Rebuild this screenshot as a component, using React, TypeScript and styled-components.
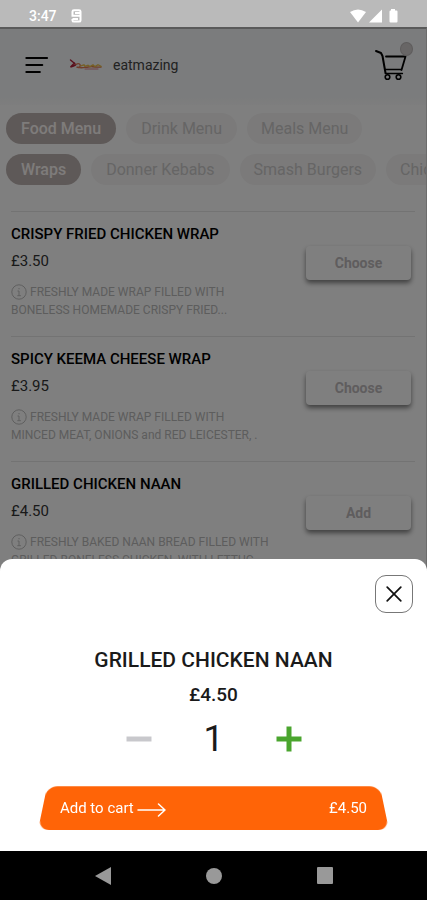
import React, { useState } from "react";
import styled, { createGlobalStyle } from "styled-components";

const GlobalStyle = createGlobalStyle`
  * { box-sizing: border-box; }
  body { margin: 0; font-family: Roboto, "Liberation Sans", sans-serif; background: #fff; }
  button { font-family: inherit; border: 0; padding: 0; background: none; cursor: pointer; }
  h2, h3, p { margin: 0; }
`;

const Screen = styled.div`
  display: flex;
  flex-direction: column;
  height: 100vh;
  overflow: hidden;
`;

const StatusBar = styled.div`
  display: flex;
  flex: none;
  align-items: center;
  gap: 14px;
  height: 27px;
  padding: 5px 27px 0 29px;
  background: #bababa;
  color: #fff;
  font-size: 14px;
  line-height: 20px;
  font-weight: 500;
`;

const StatusIcons = styled.div`
  display: flex;
  align-items: center;
  gap: 3px;
  margin-left: auto;
`;

const Stage = styled.div`
  position: relative;
  flex: 1;
  min-height: 0;
  overflow: hidden;
`;

const Page = styled.div`
  height: 100%;
  overflow: hidden;
  background: #fff;
  border-top: 2px solid #b4b4b4;
  border-right: 1px solid #d8d8d8;
`;

const Header = styled.header`
  display: flex;
  align-items: center;
  height: 76px;
  padding: 0 17px 4px 25px;
  background: linear-gradient(#f6f8fa 88%, #fcfcfc);
`;

const IconButton = styled.button`
  display: flex;
  align-items: center;
  justify-content: center;
`;

const Brand = styled.a`
  display: flex;
  align-items: center;
  gap: 9px;
  margin-left: 20px;
  color: #444;
  font-size: 14px;
  line-height: 20px;
  text-decoration: none;
`;

const CartButton = styled(IconButton)`
  position: relative;
  margin-left: auto;
`;

const Badge = styled.span`
  position: absolute;
  top: -7px;
  right: -4px;
  width: 13px;
  height: 14px;
  border: 1px solid #bcb8b8;
  border-radius: 50%;
  background: #d0cccc;
`;

const Chips = styled.nav`
  display: flex;
  gap: 10px;
  margin: 8px 0 0 6px;
  overflow: hidden;

  & + & { margin-top: 10px; }
`;

const Chip = styled.button<{ $active?: boolean }>`
  flex: none;
  height: 31px;
  padding: 0 15px;
  border-radius: 16px;
  font-size: 16px;
  line-height: 20px;
  font-weight: ${(p) => (p.$active ? 500 : 400)};
  color: ${(p) => (p.$active ? "#fcf8f6" : "#cccaca")};
  background: ${(p) => (p.$active ? "#bcb2b0" : "#f6f5f5")};

  &:nth-child(n + 3) { padding: 0 14px; }
`;

const Items = styled.div`
  margin: 26px 11px 0;
`;

const Item = styled.article`
  display: flex;
  align-items: flex-start;
  justify-content: space-between;
  height: 125px;
  padding-top: 12px;
  border-top: 1px solid #e6e6e6;
  color: #333;
`;

const ItemName = styled.h3`
  font-size: 15px;
  line-height: 20px;
  font-weight: 500;
  color: #000;
`;

const ItemPrice = styled.p`
  margin-top: 7px;
  font-size: 15px;
  line-height: 20px;
`;

const ItemInfo = styled.p`
  margin-top: 12px;
  color: #bababa;
  font-size: 12px;
  line-height: 18px;
  white-space: nowrap;

  svg { vertical-align: -4px; margin-right: 3px; }
`;

const ChooseButton = styled.button`
  flex: none;
  width: 105px;
  height: 34px;
  margin: 22px 4px 0 0;
  border-radius: 4px;
  background: #fff;
  box-shadow: 0 3px 5px rgba(0, 0, 0, 0.5);
  color: #bebabc;
  font-size: 14px;
  line-height: 20px;
  font-weight: 700;
`;

const Backdrop = styled.div`
  position: absolute;
  inset: 0;
  background: rgba(0, 0, 0, 0.5);
`;

const Sheet = styled.section`
  position: absolute;
  left: 0;
  right: 0;
  bottom: 0;
  display: flex;
  flex-direction: column;
  align-items: center;
  padding: 16px 14px 21px;
  border-radius: 12px 12px 0 0;
  background: #fff;
  color: #1a1a1a;
`;

const CloseButton = styled(IconButton)`
  align-self: flex-end;
  width: 38px;
  height: 38px;
  border: 1px solid #777;
  border-radius: 11px;
`;

const SheetTitle = styled.h2`
  margin-top: 35px;
  font-size: 21px;
  line-height: 24px;
  font-weight: 500;
`;

const SheetPrice = styled.p`
  margin-top: 11px;
  font-size: 19px;
  line-height: 24px;
  font-weight: 500;
`;

const Stepper = styled.div`
  display: flex;
  align-items: center;
  gap: 16px;
  margin-top: 12px;
`;

const StepButton = styled(IconButton)`
  width: 32px;
  height: 32px;
`;

const Quantity = styled.output`
  width: 86px;
  text-align: center;
  font-size: 36px;
  line-height: 40px;
`;

const AddButton = styled.button`
  position: relative;
  display: flex;
  align-items: center;
  justify-content: space-between;
  width: 88%;
  height: 44px;
  margin-top: 27px;
  padding: 0 22px;
  color: #fff;
  font-size: 15px;
  line-height: 20px;
  font-weight: 400;

  &::before {
    content: "";
    position: absolute;
    inset: -5px 0 0;
    border-radius: 11px;
    background: #ff6407;
    transform: perspective(306px) rotateX(20deg);
    transform-origin: bottom;
  }
`;

const AddLabel = styled.span`
  position: relative;
  display: flex;
  align-items: center;
  gap: 3px;
`;

const NavBar = styled.nav`
  display: flex;
  flex: none;
  align-items: center;
  justify-content: center;
  gap: 95px;
  height: 49px;
  background: #000;
`;

const MenuIcon = () => (
  <svg width="24" height="18" viewBox="0 0 24 18" fill="none" stroke="#000" strokeWidth="2.2" strokeLinecap="round">
    <path d="M1.4 2H22M1.4 9H17.2M1.4 16H14.8" />
  </svg>
);

const Logo = () => (
  <svg width="35" height="14" viewBox="0 0 35 14" fill="none" strokeLinecap="round">
    <path d="M1.5 2l3 2.5 2 2M5.5 5L1.5 9l3-1 2-1" stroke="#b5203a" strokeWidth="1.4" />
    <path d="M7 6.5c3-2 5 0 4 2s-5 0-2 .8 5 .4 8 0 4-1 7-.5 5 .5 8 .2" stroke="#e07a54" strokeWidth="1.4" />
    <path d="M12 7.8l3-1 1 1.6 3-1.2 2 1.4 3-1.7 2 1.8 3-2 3 1.7" stroke="#ecc04c" strokeWidth="1.4" />
    <path d="M16 11h13" stroke="#de8190" strokeWidth="1" />
  </svg>
);

const CartIcon = () => (
  <svg width="34" height="32" viewBox="0 0 34 32" fill="none" stroke="#000" strokeLinecap="round" strokeLinejoin="round">
    <path d="M1 2l5 2 1.5 3L10.5 24" strokeWidth="2" />
    <path d="M11 7.5h19.5L26.5 21" strokeWidth="1.8" />
    <path d="M10 20.5h16M10.5 24.5h17" strokeWidth="1.3" />
    <circle cx="12.5" cy="28" r="2.3" strokeWidth="1.6" />
    <circle cx="23.5" cy="28" r="2.3" strokeWidth="1.6" />
  </svg>
);

const InfoIcon = () => (
  <svg width="16" height="16" viewBox="0 0 16 16" fill="none" stroke="#bebebe">
    <circle cx="8" cy="8" r="7.2" />
    <path d="M6.5 7H8v4.5M6.3 11.7h3.6M8 4v1.3" />
  </svg>
);

const categories = ["Food Menu", "Drink Menu", "Meals Menu"];
const groups = ["Wraps", "Donner Kebabs", "Smash Burgers", "Chicken Burgers"];
const items = [
  { name: "CRISPY FRIED CHICKEN WRAP", price: "£3.50", info: ["FRESHLY MADE WRAP FILLED WITH", "BONELESS HOMEMADE CRISPY FRIED..."], action: "Choose" },
  { name: "SPICY KEEMA CHEESE WRAP", price: "£3.95", info: ["FRESHLY MADE WRAP FILLED WITH", "MINCED MEAT, ONIONS and RED LEICESTER, ."], action: "Choose" },
  { name: "GRILLED CHICKEN NAAN", price: "£4.50", info: ["FRESHLY BAKED NAAN BREAD FILLED WITH", "GRILLED BONELESS CHICKEN, WITH LETTUC"], action: "Add" },
];

export default function App() {
  const [quantity, setQuantity] = useState(1);
  const total = `£${(4.5 * quantity).toFixed(2)}`;

  return (
    <Screen>
      <GlobalStyle />
      <StatusBar>
        <span>3:47</span>
        <svg width="11" height="14" viewBox="0 0 11 14" fill="none" stroke="#fff" strokeWidth="2">
          <path d="M9.5 4V2.5Q9.5 1.2 8 1.2H3Q1.5 1.2 1.5 2.6V6.8H9.5V11.4Q9.5 12.6 8 12.6H3Q1.5 12.6 1.5 11.4V10M4 4H9.5V7M1.5 10H7" />
        </svg>
        <StatusIcons>
          <svg width="16" height="14" viewBox="0 0 16 14" fill="#fff"><path d="M0 3Q8-2 16 3L8 13.5Z" /></svg>
          <svg width="13" height="14" viewBox="0 0 13 14" fill="#fff"><path d="M13 .5V13.5H0Z" /></svg>
          <svg width="15" height="14" viewBox="0 0 15 14" fill="#fff"><path d="M6 0h4v1.5h1.5q1 0 1 1v10q0 1-1 1h-6q-1 0-1-1v-10q0-1 1-1H6Z" /></svg>
        </StatusIcons>
      </StatusBar>
      <Stage>
        <Page>
          <Header>
            <IconButton aria-label="Open menu"><MenuIcon /></IconButton>
            <Brand href="#"><Logo />eatmazing</Brand>
            <CartButton aria-label="Cart"><CartIcon /><Badge /></CartButton>
          </Header>
          <Chips aria-label="Menus">
            {categories.map((label, i) => <Chip key={label} $active={i === 0}>{label}</Chip>)}
          </Chips>
          <Chips aria-label="Groups">
            {groups.map((label, i) => <Chip key={label} $active={i === 0}>{label}</Chip>)}
          </Chips>
          <Items>
            {items.map((item) => (
              <Item key={item.name}>
                <div>
                  <ItemName>{item.name}</ItemName>
                  <ItemPrice>{item.price}</ItemPrice>
                  <ItemInfo><InfoIcon />{item.info[0]}<br />{item.info[1]}</ItemInfo>
                </div>
                <ChooseButton>{item.action}</ChooseButton>
              </Item>
            ))}
          </Items>
        </Page>
        <Backdrop />
        <Sheet role="dialog" aria-labelledby="sheet-title">
          <CloseButton aria-label="Close">
            <svg width="16" height="16" viewBox="0 0 16 16" stroke="#111" strokeWidth="1.7" strokeLinecap="round"><path d="M1.2 1.2l13.6 13.6M14.8 1.2L1.2 14.8" /></svg>
          </CloseButton>
          <SheetTitle id="sheet-title">GRILLED CHICKEN NAAN</SheetTitle>
          <SheetPrice>£4.50</SheetPrice>
          <Stepper>
            <StepButton aria-label="Decrease quantity" onClick={() => setQuantity(Math.max(1, quantity - 1))}>
              <svg width="26" height="26" viewBox="0 0 26 26" stroke="#c8c8cc" strokeWidth="5"><path d="M.5 13h25" /></svg>
            </StepButton>
            <Quantity>{quantity}</Quantity>
            <StepButton aria-label="Increase quantity" onClick={() => setQuantity(quantity + 1)}>
              <svg width="26" height="26" viewBox="0 0 26 26" stroke="#4aa52e" strokeWidth="5"><path d="M.5 13h25M13 .5v25" /></svg>
            </StepButton>
          </Stepper>
          <AddButton>
            <AddLabel>
              Add to cart
              <svg width="29" height="18" viewBox="0 0 29 18" fill="none" stroke="#fff" strokeWidth="1.5" strokeLinecap="round" strokeLinejoin="round"><path d="M1 11h27M21.5 5l6.5 6-6.5 6" /></svg>
            </AddLabel>
            <AddLabel>{total}</AddLabel>
          </AddButton>
        </Sheet>
      </Stage>
      <NavBar aria-label="System">
        <IconButton aria-label="Back"><svg width="16" height="18" viewBox="0 0 16 18" fill="#999"><path d="M16 0v18L0 9Z" /></svg></IconButton>
        <IconButton aria-label="Home"><svg width="16" height="16" viewBox="0 0 16 16" fill="#999"><circle cx="8" cy="8" r="8" /></svg></IconButton>
        <IconButton aria-label="Recent apps"><svg width="16" height="17" viewBox="0 0 16 17" fill="#999"><rect width="16" height="17" rx="1" /></svg></IconButton>
      </NavBar>
    </Screen>
  );
}
